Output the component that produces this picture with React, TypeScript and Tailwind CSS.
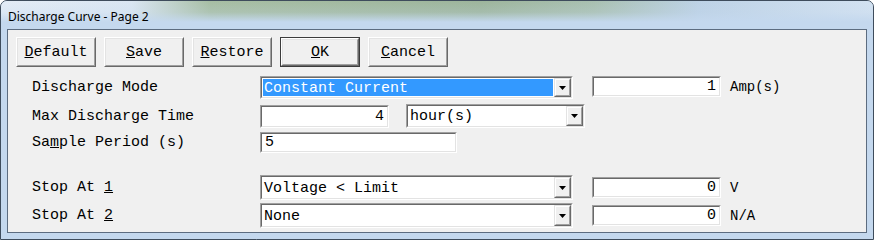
const mono = "font-['Liberation_Mono','Courier_New',monospace]"

const Sunken = ({ className, children }: { className: string; children?: React.ReactNode }) => (
  <div className={"border border-t-[#a0a0a0] border-l-[#a0a0a0] border-b-white border-r-white " + className}>
    <div className="h-full border border-t-[#696969] border-l-[#696969] border-b-[#e3e3e3] border-r-[#e3e3e3] bg-white flex">
      {children}
    </div>
  </div>
)

const TextField = ({ value, className, left }: { value: string; className: string; left?: boolean }) => (
  <Sunken className={className}>
    <div className={"flex-1 flex items-center px-[3px] text-[15px] leading-none text-black " + (left ? "justify-start" : "justify-end")}>
      {value}
    </div>
  </Sunken>
)

const Combo = ({ value, className, selected }: { value: string; className: string; selected?: boolean }) => (
  <Sunken className={className}>
    <div className="flex-1 p-[1px] flex">
      <div
        className={
          "flex-1 flex items-center pl-[1px] pt-[1px] text-[15px] leading-none " +
          (selected ? "bg-[#3399ff] text-white" : "text-black")
        }>
        {value}
      </div>
    </div>
    <div className="w-[17px] border border-t-[#e3e3e3] border-l-[#e3e3e3] border-b-[#696969] border-r-[#696969]">
      <div className="h-full border border-t-white border-l-white border-b-[#a0a0a0] border-r-[#a0a0a0] bg-[#f0f0f0] flex items-center justify-center">
        <svg width="7" height="4" viewBox="0 0 7 4">
          <path d="M0 0h7L3.5 4z" fill="#000" />
        </svg>
      </div>
    </div>
  </Sunken>
)

const Button = ({ first, rest, isDefault }: { first: string; rest: string; isDefault?: boolean }) => (
  <div
    className={
      "w-[80px] h-[30px] " +
      (isDefault ? "border border-[#3c3c3c]" : "")
    }>
    <div className="h-full border border-t-white border-l-white border-b-[#696969] border-r-[#696969]">
      <div className="h-full border border-t-[#e3e3e3] border-l-[#e3e3e3] border-b-[#a0a0a0] border-r-[#a0a0a0] bg-[#f0f0f0] flex items-center justify-center pt-[1px] text-[15px] leading-none text-black">
        <span>
          <u>{first}</u>
          {rest}
        </span>
      </div>
    </div>
  </div>
)

const Label = ({ children }: { children: React.ReactNode }) => (
  <div className="w-[228px] text-[15px] leading-none text-black">{children}</div>
)

const Unit = ({ children }: { children: React.ReactNode }) => (
  <div className="ml-[9px] text-[14px] leading-none text-black">{children}</div>
)

export default function App() {
  return (
    <div className="w-[874px] h-[240px] bg-[#c4d8ee] border border-[#3e4c5c] rounded-t-[7px] flex flex-col overflow-hidden">
      <div className="h-[28px] shrink-0 flex items-center pl-[7px] pt-[3px] bg-[linear-gradient(to_bottom,rgba(196,216,238,0)_0%,rgba(196,216,238,0.2)_40%,#c4d8ee_75%),linear-gradient(to_right,#e3ecf6_0%,#dae6f2_15%,#a7bea3_24%,#9db59b_55%,#a9c0b0_68%,#bdd2e6_80%,#d3e2f1_100%)]">
        <span className="font-['Noto_Sans','DejaVu_Sans',sans-serif] text-[12px] text-black">
          Discharge Curve - Page 2
        </span>
      </div>

      <div className={"flex-1 mx-[6px] mb-[6px] border border-[#5c6c80] bg-[#f0f0f0] pt-[7px] " + mono}>
        <div className="flex gap-[8px] pl-[8px]">
          <Button first="D" rest="efault" />
          <Button first="S" rest="ave" />
          <Button first="R" rest="estore" />
          <Button first="O" rest="K" isDefault />
          <Button first="C" rest="ancel" />
        </div>

        <div className="pl-[24px]">
          <div className="mt-[9px] flex items-start">
            <div className="h-[23px] flex items-center">
              <Label>Discharge Mode</Label>
            </div>
            <Combo value="Constant Current" selected className="w-[313px] h-[23px]" />
            <div className="ml-[19px] flex items-center">
              <TextField value="1" className="w-[129px] h-[21px]" />
              <Unit>Amp(s)</Unit>
            </div>
          </div>

          <div className="mt-[5px] flex items-center h-[24px]">
            <Label>Max Discharge Time</Label>
            <TextField value="4" className="w-[129px] h-[23px]" />
            <Combo value="hour(s)" className="ml-[17px] w-[179px] h-[24px]" />
          </div>

          <div className="mt-[4px] flex items-center h-[21px]">
            <Label>
              Sa<u>m</u>ple Period (s)
            </Label>
            <TextField value="5" left className="w-[197px] h-[21px]" />
          </div>

          <div className="mt-[22px] flex items-center h-[25px]">
            <Label>
              Stop At <u>1</u>
            </Label>
            <Combo value="Voltage < Limit" className="w-[313px] h-[25px]" />
            <div className="ml-[19px] flex items-center">
              <TextField value="0" className="w-[129px] h-[21px]" />
              <Unit>V</Unit>
            </div>
          </div>

          <div className="mt-[3px] flex items-center h-[25px]">
            <Label>
              Stop At <u>2</u>
            </Label>
            <Combo value="None" className="w-[313px] h-[25px]" />
            <div className="ml-[19px] flex items-center">
              <TextField value="0" className="w-[129px] h-[21px]" />
              <Unit>N/A</Unit>
            </div>
          </div>
        </div>
      </div>
    </div>
  )
}
